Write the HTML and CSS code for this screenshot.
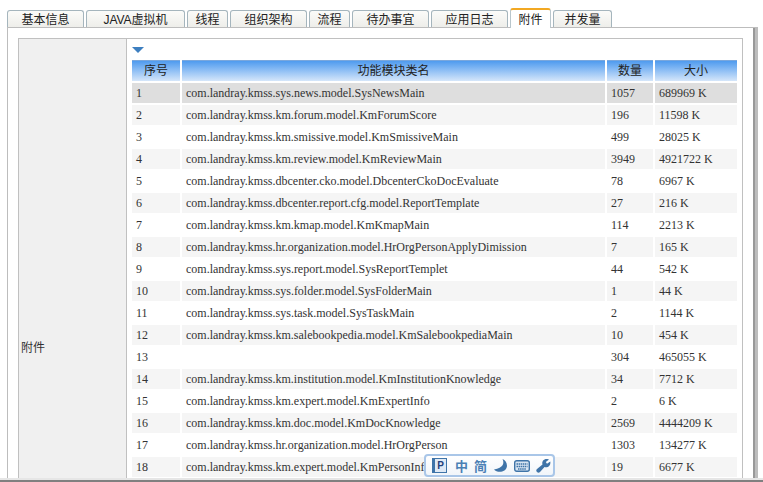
FILE: index.html
```html
<!DOCTYPE html>
<html lang="zh-CN">
<head>
    <meta charset="UTF-8">
    <title>附件</title>
    <link rel="stylesheet" href="styles.css">
</head>
<body>
    <div class="main">
        <ul class="tabs">
            <li class="tab tab-w1">基本信息</li>
            <li class="tab tab-w2">JAVA虚拟机</li>
            <li class="tab tab-w3">线程</li>
            <li class="tab tab-w1">组织架构</li>
            <li class="tab tab-w3">流程</li>
            <li class="tab tab-w1">待办事宜</li>
            <li class="tab tab-w1">应用日志</li>
            <li class="tab tab-w3 active">附件</li>
            <li class="tab tab-w5">并发量</li>
        </ul>

        <div class="panel">
            <div class="frame">
                <div class="side-label">附件</div>
                <div class="content">
                    <div class="toggle"></div>
                    <table class="data">
                        <colgroup>
                            <col class="col-no"><col class="col-name"><col class="col-count"><col class="col-size">
                        </colgroup>
                        <thead>
                            <tr><th>序号</th><th>功能模块类名</th><th>数量</th><th>大小</th></tr>
                        </thead>
                        <tbody>
                            <tr class="selected"><td>1</td><td>com.landray.kmss.sys.news.model.SysNewsMain</td><td>1057</td><td>689969 K</td></tr>
                            <tr class="plain"><td>2</td><td>com.landray.kmss.km.forum.model.KmForumScore</td><td>196</td><td>11598 K</td></tr>
                            <tr><td>3</td><td>com.landray.kmss.km.smissive.model.KmSmissiveMain</td><td>499</td><td>28025 K</td></tr>
                            <tr class="plain"><td>4</td><td>com.landray.kmss.km.review.model.KmReviewMain</td><td>3949</td><td>4921722 K</td></tr>
                            <tr><td>5</td><td>com.landray.kmss.dbcenter.cko.model.DbcenterCkoDocEvaluate</td><td>78</td><td>6967 K</td></tr>
                            <tr class="plain"><td>6</td><td>com.landray.kmss.dbcenter.report.cfg.model.ReportTemplate</td><td>27</td><td>216 K</td></tr>
                            <tr><td>7</td><td>com.landray.kmss.km.kmap.model.KmKmapMain</td><td>114</td><td>2213 K</td></tr>
                            <tr class="plain"><td>8</td><td>com.landray.kmss.hr.organization.model.HrOrgPersonApplyDimission</td><td>7</td><td>165 K</td></tr>
                            <tr><td>9</td><td>com.landray.kmss.sys.report.model.SysReportTemplet</td><td>44</td><td>542 K</td></tr>
                            <tr class="plain"><td>10</td><td>com.landray.kmss.sys.folder.model.SysFolderMain</td><td>1</td><td>44 K</td></tr>
                            <tr><td>11</td><td>com.landray.kmss.sys.task.model.SysTaskMain</td><td>2</td><td>1144 K</td></tr>
                            <tr class="plain"><td>12</td><td>com.landray.kmss.km.salebookpedia.model.KmSalebookpediaMain</td><td>10</td><td>454 K</td></tr>
                            <tr><td>13</td><td></td><td>304</td><td>465055 K</td></tr>
                            <tr class="plain"><td>14</td><td>com.landray.kmss.km.institution.model.KmInstitutionKnowledge</td><td>34</td><td>7712 K</td></tr>
                            <tr><td>15</td><td>com.landray.kmss.km.expert.model.KmExpertInfo</td><td>2</td><td>6 K</td></tr>
                            <tr class="plain"><td>16</td><td>com.landray.kmss.km.doc.model.KmDocKnowledge</td><td>2569</td><td>4444209 K</td></tr>
                            <tr><td>17</td><td>com.landray.kmss.hr.organization.model.HrOrgPerson</td><td>1303</td><td>134277 K</td></tr>
                            <tr class="plain"><td>18</td><td>com.landray.kmss.km.expert.model.KmPersonInfo</td><td>19</td><td>6677 K</td></tr>
                        </tbody>
                    </table>
                </div>
            </div>
        </div>
    </div>
    <div class="page-end"></div>

    <div class="ime">
        <span class="ime-logo">P</span>
        <span class="ime-key">中</span>
        <span class="ime-key">简</span>
        <svg class="ime-icon" viewBox="0 0 15 15"><path d="M9.500 1C11.500 5 10.500 10 1 11.500C4 15 13 15 14 8C14 4.500 12 2 9.500 1Z" fill="#3f74a8"/></svg>
        <svg class="ime-icon ime-kb" viewBox="0 0 16 12"><rect x=".7" y=".7" width="14.600" height="10.600" rx="2" fill="#d8e5f2" stroke="#3f74a8" stroke-width="1.400"/><path d="M2.500 4H13.500M2.500 6.500H13.500M4 9H12" stroke="#3f74a8" stroke-width="1.300" stroke-dasharray="1.500 .6"/></svg>
        <svg class="ime-icon" viewBox="0 0 15 15"><path d="M1 14C0 13 0 12 1 11L6.500 6.500C5.500 3 8 .5 11.500 1C12 1 12.500 1.200 13 1.500L9.800 4L11 5.800L14.300 3.500C15 8 11.500 10 8.500 9L4 14C3 15 2 15 1 14Z" fill="#3f74a8"/></svg>
    </div>
</body>
</html>
```

FILE: styles.css
```css
body {
    margin: 0;
    height: 482px;
    overflow: hidden;
    display: flex;
    flex-direction: column;
    background-color: #fff;
    font-family: "Liberation Serif", "Noto Sans CJK SC", serif;
    font-size: 12px;
    color: #333;
    position: relative;
}

.main {
    flex: 1;
    min-height: 0;
    padding: 8px 5px 0 7px;
}

.page-end {
    flex: none;
    height: 2px;
    background-color: #e6e6e6;
    border-bottom: 2px solid #808080;
}

/* tabs */
.tabs {
    display: flex;
    align-items: flex-end;
    gap: 2px;
    list-style: none;
    margin: 0;
    padding: 0;
    height: 19px;
}

.tab {
    box-sizing: border-box;
    height: 17px;
    border: 1px solid #a5b5bd;
    border-bottom: none;
    border-radius: 3px 3px 0 0;
    background: linear-gradient(#fbfbf9, #eeeeea);
    font-family: "Liberation Sans", "Noto Sans CJK SC", sans-serif;
    font-size: 12px;
    line-height: 18px;
    color: #222;
    text-align: center;
    white-space: nowrap;
}

.tab-w1 { width: 77px; }
.tab-w2 { width: 99px; }
.tab-w3 { width: 41px; }
.tab-w5 { width: 59px; }

.tab.active {
    height: 20px;
    margin-bottom: -1px;
    border-top: 2px solid #f2a823;
    border-left-color: #b9c6cc;
    border-right-color: #b9c6cc;
    background: #fff;
    line-height: 20px;
    position: relative;
}

/* panel */
.panel {
    box-sizing: border-box;
    width: 751px;
    height: 451px;
    overflow: hidden;
    border: 1px solid #bdbdbd;
    border-right: 3px solid #bdbdbd;
    border-bottom: none;
    box-shadow: inset -2px 0 0 #999;
    padding: 10px 10px 0 10px;
}

.frame {
    display: flex;
    width: 725px;
    border: 1px solid #c0c0c0;
    box-sizing: border-box;
    height: 616px;
}

.side-label {
    box-sizing: border-box;
    width: 108px;
    flex: none;
    display: flex;
    align-items: center;
    padding-left: 2px;
    background-color: #f0f0f0;
    border-right: 1px solid #c0c0c0;
    font-family: "Liberation Sans", "Noto Sans CJK SC", sans-serif;
    font-size: 12px;
}

.content {
    flex: 1;
    padding: 8px 5px 0 5px;
    overflow: hidden;
}

.toggle {
    width: 0;
    height: 0;
    margin-bottom: 7px;
    border-left: 6px solid transparent;
    border-right: 6px solid transparent;
    border-top: 6px solid #3d7fc0;
}

/* table */
.data {
    table-layout: fixed;
    border-collapse: separate;
    border-spacing: 2px;
    margin: -2px 0 0 -2px;
    width: 609px;
}

.col-no { width: 48px; }
.col-name { width: 423px; }
.col-count { width: 46px; }
.col-size { width: 82px; }

.data th {
    box-sizing: border-box;
    height: 20px;
    padding: 0 0 3px;
    border-top: 1px solid #7aa7dc;
    background: linear-gradient(#4f9bef, #d5e6fa);
    font-family: "Liberation Sans", "Noto Sans CJK SC", sans-serif;
    font-size: 12px;
    font-weight: normal;
    color: #222;
}

.data td {
    box-sizing: border-box;
    height: 20px;
    padding: 0 4px;
    white-space: nowrap;
    overflow: hidden;
}

.data tr.plain td {
    background-color: #f5f5f5;
}

.data tr.selected td {
    background-color: #dedede;
}

/* ime toolbar floating over the page */
.ime {
    position: absolute;
    left: 424px;
    top: 454px;
    box-sizing: border-box;
    width: 131px;
    height: 23px;
    display: flex;
    align-items: center;
    gap: 6px;
    padding-left: 6px;
    background: linear-gradient(#fff, #f1f5fa);
    border: 2px solid #a9c6e8;
    border-radius: 4px;
}

.ime-logo {
    box-sizing: border-box;
    width: 15px;
    height: 15px;
    margin-right: 2px;
    border: 1px solid #3f74a8;
    border-left-width: 3px;
    background-color: #dfe9f5;
    font-family: "Liberation Sans", sans-serif;
    font-size: 10px;
    font-weight: bold;
    line-height: 13px;
    text-align: center;
    color: #23407a;
}

.ime-key {
    font-family: "Noto Sans CJK SC", sans-serif;
    font-size: 13px;
    font-weight: bold;
    line-height: 14px;
    color: #4a80b5;
}

.ime-icon {
    width: 15px;
    height: 15px;
}

.ime-kb {
    width: 16px;
    height: 12px;
}
```
